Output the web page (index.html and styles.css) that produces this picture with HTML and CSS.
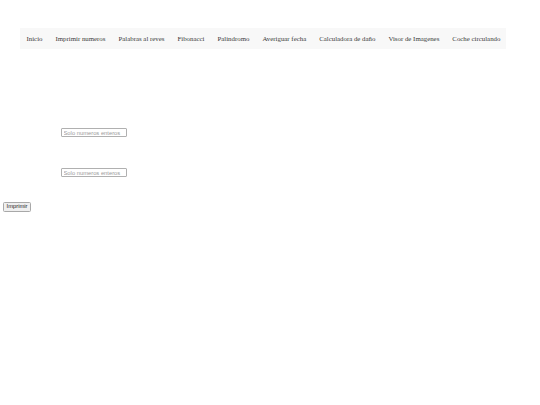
FILE: index.html
```
<!DOCTYPE html>
<html lang="es">
<head>
<meta charset="utf-8">
<title>Imprimir numeros</title>
<link rel="stylesheet" href="styles.css">
</head>
<body>
<nav class="nav">
  <a class="nav-item" href="#">Inicio</a>
  <a class="nav-item" href="#">Imprimir numeros</a>
  <a class="nav-item" href="#">Palabras al reves</a>
  <a class="nav-item" href="#">Fibonacci</a>
  <a class="nav-item" href="#">Palindromo</a>
  <a class="nav-item" href="#">Averiguar fecha</a>
  <a class="nav-item" href="#">Calculadora de daño</a>
  <a class="nav-item" href="#">Visor de Imagenes</a>
  <a class="nav-item" href="#">Coche circulando</a>
</nav>
<main class="form">
  <div class="field field-first"><input class="num" type="text" placeholder="Solo numeros enteros"></div>
  <div class="field field-second"><input class="num" type="text" placeholder="Solo numeros enteros"></div>
  <button class="btn" type="button">Imprimir</button>
</main>
</body>
</html>
```
FILE: styles.css
```
html, body {
  margin: 0;
  padding: 0;
  background: #ffffff;
}
body {
  font-family: "Liberation Serif", "Times New Roman", serif;
  width: 540px;
  height: 405px;
  overflow: hidden;
}
.nav {
  display: flex;
  width: 486px;
  height: 21px;
  margin: 28px 0 0 20px;
  padding: 0;
  background: #f8f8f8;
  align-items: center;
  box-sizing: border-box;
}
.nav-item {
  padding: 0 6.5px;
  font-size: 6.85px;
  line-height: 21px;
  color: #3a3a3a;
  text-decoration: none;
  white-space: nowrap;
}
.form {
  display: flex;
  flex-direction: column;
  align-items: flex-start;
}
.field {
  margin-left: 61px;
}
.field-first {
  margin-top: 79px;
}
.field-second {
  margin-top: 31px;
}
.num {
  display: block;
  width: 66px;
  height: 9px;
  box-sizing: border-box;
  margin: 0;
  padding: 0 1.5px;
  border: 0.8px solid #b0b0b0;
  border-radius: 1px;
  font-family: "Liberation Sans", Arial, sans-serif;
  font-size: 5.8px;
  background: #fff;
}
.num::placeholder {
  font-family: "Liberation Sans", Arial, sans-serif;
  color: #9a9a9a;
}
.btn {
  margin: 25px 0 0 3px;
  width: 28px;
  height: 10px;
  box-sizing: border-box;
  padding: 0;
  border: 0.8px solid #a8a8a8;
  border-radius: 1.5px;
  background: #efefef;
  font-family: "Liberation Sans", Arial, sans-serif;
  font-size: 5.8px;
  color: #222;
  line-height: 1;
}
```
